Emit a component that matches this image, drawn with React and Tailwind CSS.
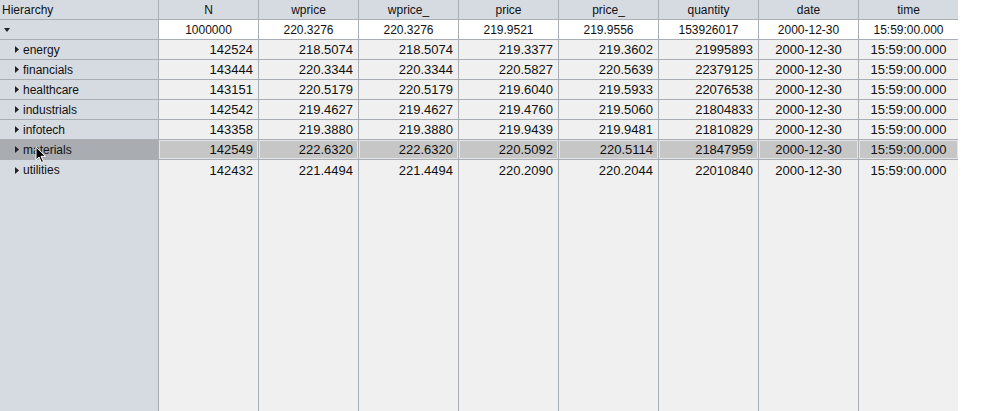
import React from "react"

const columns = [
  { key: "N", align: "right" },
  { key: "wprice", align: "right" },
  { key: "wprice_", align: "right" },
  { key: "price", align: "right" },
  { key: "price_", align: "right" },
  { key: "quantity", align: "right" },
  { key: "date", align: "center" },
  { key: "time", align: "center" },
]

const total = ["1000000", "220.3276", "220.3276", "219.9521", "219.9556", "153926017", "2000-12-30", "15:59:00.000"]

const rows = [
  ["energy", "142524", "218.5074", "218.5074", "219.3377", "219.3602", "21995893"],
  ["financials", "143444", "220.3344", "220.3344", "220.5827", "220.5639", "22379125"],
  ["healthcare", "143151", "220.5179", "220.5179", "219.6040", "219.5933", "22076538"],
  ["industrials", "142542", "219.4627", "219.4627", "219.4760", "219.5060", "21804833"],
  ["infotech", "143358", "219.3880", "219.3880", "219.9439", "219.9481", "21810829"],
  ["materials", "142549", "222.6320", "222.6320", "220.5092", "220.5114", "21847959"],
  ["utilities", "142432", "221.4494", "221.4494", "220.2090", "220.2044", "22010840"],
]

const SELECTED = 5

const Cursor = () => (
  <svg className="absolute left-[35px] top-[146px]" width="12" height="18" viewBox="0 0 12 18">
    <path d="M1 1 L1 14 L4 11 L6.5 16.5 L8.5 15.5 L6 10.3 L10.5 10.3 Z" fill="#000" stroke="#fff" strokeWidth="1" strokeLinejoin="round" />
  </svg>
)

export default function App() {
  return (
    <div className="relative flex h-[411px] w-[986px] bg-white text-[#111] [font-family:'Liberation_Sans',Arial,sans-serif]">
      {/* Hierarchy column */}
      <div className="flex h-full w-[159px] flex-col border-r border-[#a9aeb5] bg-[#d6dbe2]">
        <div className="flex h-[20px] items-center border-b border-[#a9aeb5] pl-[2px] text-[12px] leading-none">Hierarchy</div>
        <div className="flex h-[20px] items-center border-b border-[#a9aeb5] pl-[4px]">
          <svg width="6" height="4" viewBox="0 0 6 4"><path d="M0 0 H6 L3 4 Z" fill="#222" /></svg>
        </div>
        {rows.map((r, i) => (
          <div
            key={r[0]}
            className={`flex h-[20px] items-center gap-[4px] pl-[15px] text-[12px] leading-none ${i < rows.length - 1 ? "border-b border-[#a9aeb5]" : ""} ${i === SELECTED ? "bg-[#a9adb2]" : ""}`}
          >
            <svg width="4" height="7" viewBox="0 0 4 7"><path d="M0 0 L4 3.5 L0 7 Z" fill="#222" /></svg>
            <span>{r[0]}</span>
          </div>
        ))}
      </div>

      {/* Data columns */}
      {columns.map((c, ci) => (
        <div
          key={c.key}
          className={`flex h-full flex-col bg-[#f0f0f0] ${ci < columns.length - 1 ? "w-[100px] border-r border-[#a9aeb5]" : "w-[99px]"}`}
        >
          <div className="flex h-[20px] items-center justify-center border-b border-[#a9aeb5] bg-[#d6dbe2] text-[12px] leading-none">{c.key}</div>
          <div className="flex h-[20px] items-center justify-center border-b border-[#a9aeb5] bg-white text-[12px] leading-none">{total[ci]}</div>
          {rows.map((r, i) => {
            const val = ci < 6 ? r[ci + 1] : ci === 6 ? "2000-12-30" : "15:59:00.000"
            return (
              <div
                key={r[0]}
                className={`flex h-[20px] items-center text-[13px] leading-none ${c.align === "right" ? "justify-end pr-[5px]" : "justify-center"} ${i < rows.length - 1 ? "border-b border-[#a9aeb5]" : ""} ${i === SELECTED ? "bg-[#c6c6c6] shadow-[inset_0_0_0_1px_#e4e4e4]" : ""}`}
              >
                {val}
              </div>
            )
          })}
        </div>
      ))}

      <Cursor />
    </div>
  )
}
